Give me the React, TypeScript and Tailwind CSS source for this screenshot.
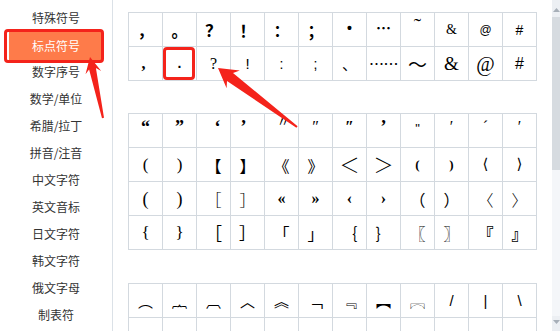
import React from "react";

type Cell = { c: string; k: string };

const CJK = "font-['Noto_Sans_CJK_SC',sans-serif]";
const SERIF = "font-['Liberation_Serif','Noto_Sans_CJK_SC',serif]";
const SANS = "font-['Liberation_Sans','Noto_Sans_CJK_SC',sans-serif]";
const DJ = "font-['DejaVu_Sans','Noto_Sans_CJK_SC',sans-serif]";

const t1: Cell[][] = [
  [
    { c: "，", k: `${CJK} text-[16px] font-bold` },
    { c: "。", k: `${CJK} text-[16px] font-bold` },
    { c: "？", k: `${CJK} text-[17px] font-bold` },
    { c: "！", k: `${CJK} text-[16px] font-bold` },
    { c: "：", k: `${CJK} text-[16px] font-bold` },
    { c: "；", k: `${CJK} text-[16px] font-bold` },
    { c: "•", k: `${SANS} text-[14px] font-bold -translate-y-[2px]` },
    { c: "…", k: `${CJK} text-[15px] font-bold -translate-y-[2px]` },
    { c: "˜", k: `${SERIF} text-[22px] -translate-y-[4px]` },
    { c: "&", k: `${SERIF} text-[14px]` },
    { c: "@", k: `${SANS} text-[12px]` },
    { c: "#", k: `${SANS} text-[14px]` },
  ],
  [
    { c: ",", k: `${SERIF} text-[16px] font-bold -translate-x-[2px]` },
    { c: ".", k: `${SANS} text-[14px] font-bold -translate-y-[1px]` },
    { c: "?", k: `${SERIF} text-[16px]` },
    { c: "!", k: `${SANS} text-[15px]` },
    { c: ":", k: `${SANS} text-[14px]` },
    { c: ";", k: `${SANS} text-[14px]` },
    { c: "、", k: `${CJK} text-[15px]` },
    { c: "……", k: `${CJK} text-[15px] tracking-[-0.5px]` },
    { c: "～", k: `${CJK} text-[19px]` },
    { c: "&", k: `${SERIF} text-[19px]` },
    { c: "@", k: `${SERIF} text-[20px]` },
    { c: "#", k: `${SANS} text-[16px]` },
  ],
];

const t2: Cell[][] = [
  [
    { c: "“", k: `${SERIF} text-[18px] font-bold -translate-y-[4px]` },
    { c: "”", k: `${SERIF} text-[18px] font-bold -translate-y-[4px]` },
    { c: "‘", k: `${SERIF} text-[18px] font-bold -translate-y-[4px] translate-x-[4px]` },
    { c: "’", k: `${SERIF} text-[18px] font-bold -translate-y-[4px] -translate-x-[4px]` },
    { c: "〃", k: `${CJK} text-[14px] -translate-y-[11px] translate-x-[2px]` },
    { c: "″", k: `${SERIF} text-[16px] -translate-y-[4px]` },
    { c: "″", k: `${SERIF} text-[16px] font-bold -translate-y-[4px]` },
    { c: "’", k: `${SERIF} text-[18px] font-bold -translate-y-[4px]` },
    { c: "\"", k: `${SANS} text-[13px] -translate-y-[2px]` },
    { c: "′", k: `${SERIF} text-[16px] -translate-y-[4px]` },
    { c: "ˊ", k: `${SERIF} text-[16px] -translate-y-[4px]` },
    { c: "′", k: `${SERIF} text-[16px] -translate-y-[4px]` },
  ],
  [
    { c: "(", k: `${SERIF} text-[17px]` },
    { c: ")", k: `${SERIF} text-[17px]` },
    { c: "【", k: `${CJK} text-[16px]` },
    { c: "】", k: `${CJK} text-[16px]` },
    { c: "《", k: `${CJK} text-[16px]` },
    { c: "》", k: `${CJK} text-[16px]` },
    { c: "＜", k: `${CJK} text-[20px] font-light` },
    { c: "＞", k: `${CJK} text-[20px] font-light` },
    { c: "(", k: `${SERIF} text-[13px] font-bold` },
    { c: ")", k: `${SERIF} text-[13px] font-bold` },
    { c: "⟨", k: `${DJ} text-[15px]` },
    { c: "⟩", k: `${DJ} text-[15px]` },
  ],
  [
    { c: "(", k: `${SERIF} text-[18px]` },
    { c: ")", k: `${SERIF} text-[18px]` },
    { c: "［", k: `${CJK} text-[16px] font-light` },
    { c: "］", k: `${CJK} text-[16px] font-light` },
    { c: "«", k: `${SERIF} text-[16px] font-bold` },
    { c: "»", k: `${SERIF} text-[16px] font-bold` },
    { c: "‹", k: `${SERIF} text-[16px] font-bold` },
    { c: "›", k: `${SERIF} text-[16px] font-bold` },
    { c: "（", k: `${CJK} text-[16px]` },
    { c: "）", k: `${CJK} text-[16px]` },
    { c: "〈", k: `${CJK} text-[16px] font-light` },
    { c: "〉", k: `${CJK} text-[16px] font-light` },
  ],
  [
    { c: "{", k: `${SERIF} text-[17px]` },
    { c: "}", k: `${SERIF} text-[17px]` },
    { c: "［", k: `${CJK} text-[17px]` },
    { c: "］", k: `${CJK} text-[17px]` },
    { c: "「", k: `${CJK} text-[16px]` },
    { c: "」", k: `${CJK} text-[16px]` },
    { c: "｛", k: `${CJK} text-[16px]` },
    { c: "｝", k: `${CJK} text-[16px]` },
    { c: "〖", k: `${CJK} text-[16px]` },
    { c: "〗", k: `${CJK} text-[16px]` },
    { c: "『", k: `${CJK} text-[16px] font-bold` },
    { c: "』", k: `${CJK} text-[16px] font-bold` },
  ],
];

const t3: Cell[][] = [
  [
    ...["︵", "︷", "︹", "︿", "︽", "﹁", "﹃", "︻", "︗"].map((c) => ({
      c,
      k: `${CJK} text-[15px]`,
    })),
    { c: "/", k: `${SANS} text-[15px]` },
    { c: "|", k: `${SANS} text-[15px]` },
    { c: "\\", k: `${SANS} text-[15px]` },
  ],
  ["︶", "︸", "︺", "﹀", "︾", "﹂", "﹄", "︼", "︘", "/", "|", "\\"].map((c) => ({
    c,
    k: `${CJK} text-[15px] text-[#c8c8c8] translate-y-[6px]`,
  })),
];

const sideItems = [
  "特殊符号",
  "标点符号",
  "数字序号",
  "数学/单位",
  "希腊/拉丁",
  "拼音/注音",
  "中文字符",
  "英文音标",
  "日文字符",
  "韩文字符",
  "俄文字母",
  "制表符",
];

function Table({ rows, mark }: { rows: Cell[][]; mark?: [number, number] }) {
  return (
    <div className="grid grid-cols-[repeat(12,34px)] border-l border-t border-[#d3d9df] w-max">
      {rows.map((r, ri) =>
        r.map((cell, ci) => (
          <div
            key={`${ri}-${ci}`}
            className="relative h-[34px] border-r border-b border-[#d3d9df] flex items-center justify-center text-black leading-none"
          >
            <span className={`inline-block ${cell.k}`}>{cell.c}</span>
            {mark && mark[0] === ri && mark[1] === ci && (
              <div className="absolute left-0 top-0 w-[32px] h-[33px] border-[3px] border-[#f4231b] rounded-[4px]" />
            )}
          </div>
        ))
      )}
    </div>
  );
}

function arrowPoints(
  tx: number,
  ty: number,
  ex: number,
  ey: number,
  headLen: number,
  headHalf: number,
  nearHalf: number,
  farHalf: number
) {
  const dx = ex - tx;
  const dy = ey - ty;
  const len = Math.hypot(dx, dy);
  const ux = dx / len;
  const uy = dy / len;
  const nx = -uy;
  const ny = ux;
  const bx = tx + ux * headLen;
  const by = ty + uy * headLen;
  const jx = tx + ux * (headLen - 4);
  const jy = ty + uy * (headLen - 4);
  const pts: [number, number][] = [
    [tx, ty],
    [bx + nx * headHalf, by + ny * headHalf],
    [jx + nx * nearHalf, jy + ny * nearHalf],
    [ex + nx * farHalf, ey + ny * farHalf],
    [ex - nx * farHalf, ey - ny * farHalf],
    [jx - nx * nearHalf, jy - ny * nearHalf],
    [bx - nx * headHalf, by - ny * headHalf],
  ];
  return pts.map((p) => `${p[0].toFixed(1)},${p[1].toFixed(1)}`).join(" ");
}

export default function App() {
  return (
    <div className="relative w-[560px] h-[331px] overflow-hidden bg-white flex font-['Noto_Sans_CJK_SC',sans-serif]">
      <aside className="w-[113px] shrink-0 border-r border-[#dbe1e7] pt-[4px] flex flex-col">
        {sideItems.map((s, i) =>
          i === 1 ? (
            <div key={s} className="relative h-[27px]">
              <div className="mx-[9px] mt-[1px] h-[28px] bg-[#fe7b4a] text-white text-[12px] flex items-center justify-center">
                {s}
              </div>
              <div className="absolute left-[4px] top-[-2px] w-[100px] h-[34px] border-[3px] border-[#f4231b] rounded-[4px]" />
            </div>
          ) : (
            <div
              key={s}
              className="h-[27px] flex items-center justify-center text-[12px] text-[#333]"
            >
              {s}
            </div>
          )
        )}
      </aside>
      <main className="flex-1 pl-[15px] pt-[12px] flex flex-col">
        <Table rows={t1} mark={[1, 1]} />
        <div className="mt-[32px]">
          <Table rows={t2} />
        </div>
        <div className="mt-[33px]">
          <Table rows={t3} />
        </div>
      </main>
      <div className="w-[8px] shrink-0 flex flex-col bg-[#f4f6f9]">
        <div className="h-[17px] bg-[#eceff3] flex items-center justify-center pt-[3px]">
          <svg width="7" height="4" viewBox="0 0 7 4">
            <polygon points="0,4 3.5,0 7,4" fill="#a7afb8" />
          </svg>
        </div>
        <div className="h-[153px] bg-[#d6dbe0]" />
        <div className="flex-1" />
        <div className="h-[15px] bg-[#eceff3] flex items-center justify-center pb-[4px]">
          <svg width="7" height="4" viewBox="0 0 7 4">
            <polygon points="0,0 3.5,4 7,0" fill="#a7afb8" />
          </svg>
        </div>
      </div>
      <svg
        className="absolute left-0 top-0 pointer-events-none"
        width="560"
        height="331"
        viewBox="0 0 560 331"
      >
        <polygon points={arrowPoints(90, 57, 103, 118, 16, 8, 3.5, 1)} fill="#f4231b" />
        <polygon points={arrowPoints(218, 68, 297, 127, 19, 11, 5, 1)} fill="#f4231b" />
      </svg>
    </div>
  );
}
